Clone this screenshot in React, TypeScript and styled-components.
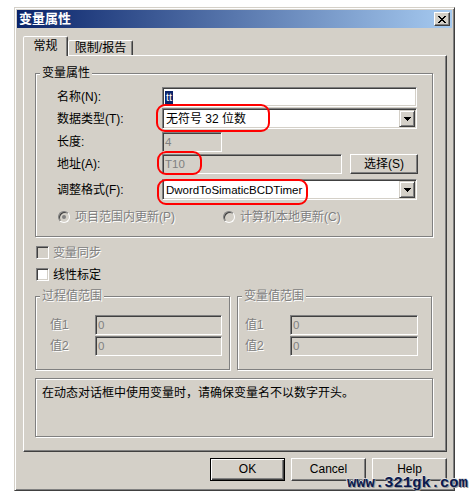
import React from "react";
import styled, { createGlobalStyle, css } from "styled-components";

const FACE = "#d4d0c8";
const SHADOW = "#808080";
const DARK = "#404040";

const GlobalStyle = createGlobalStyle`
  html, body { margin: 0; padding: 0; background: #fff; }
  body {
    font-family: "Liberation Sans", "Noto Sans CJK SC", sans-serif;
    font-size: 12px;
    line-height: 14px;
    color: #000;
  }
`;

const raised = css`
  border: 1px solid;
  border-color: #fff ${DARK} ${DARK} #fff;
  box-shadow: inset -1px -1px ${SHADOW};
`;

const sunken = css`
  border: 1px solid;
  border-color: ${SHADOW} #fff #fff ${SHADOW};
  box-shadow: inset 1px 1px ${DARK}, inset -1px -1px ${FACE};
`;

const etched = css`
  border: 1px solid ${SHADOW};
  box-shadow: 1px 1px 0 #fff, inset 1px 1px 0 #fff;
`;

const greyText = css`
  color: ${SHADOW};
  text-shadow: 1px 1px 0 #fff;
`;

const Page = styled.div`
  position: relative;
  width: 469px;
  height: 499px;
  padding: 7px 0 0 14px;
  box-sizing: border-box;
  overflow: hidden;
`;

const Window = styled.div`
  position: relative;
  box-sizing: border-box;
  width: 441px;
  height: 484px;
  padding: 2px;
  background: ${FACE};
  border: 1px solid;
  border-color: ${FACE} ${DARK} ${DARK} ${FACE};
  box-shadow: inset 1px 1px #fff, inset -1px -1px ${SHADOW};
  display: flex;
  flex-direction: column;
`;

const TitleBar = styled.div`
  height: 18px;
  flex: none;
  display: flex;
  align-items: center;
  justify-content: space-between;
  padding: 0 2px 0 2px;
  background: linear-gradient(to right, #0a246a, #a6caf0);
`;

const Title = styled.span`
  color: #fff;
  font-weight: bold;
  font-size: 13px;
`;

const CloseButton = styled.div`
  box-sizing: border-box;
  width: 16px;
  height: 14px;
  background: ${FACE};
  ${raised};
  display: flex;
  align-items: center;
  justify-content: center;
`;

const Body = styled.div`
  flex: 1;
  display: flex;
  flex-direction: column;
  padding: 8px 5px 0 6px;
`;

const TabStrip = styled.div`
  height: 19px;
  display: flex;
  align-items: flex-end;
`;

const Tab = styled.div<{ $active?: boolean; $w: number }>`
  position: relative;
  box-sizing: border-box;
  width: ${(p) => p.$w}px;
  height: ${(p) => (p.$active ? 20 : 15)}px;
  margin-bottom: ${(p) => (p.$active ? -1 : 0)}px;
  z-index: ${(p) => (p.$active ? 1 : 0)};
  background: ${FACE};
  border: 1px solid;
  border-bottom: none;
  border-color: #fff ${DARK} transparent #fff;
  border-radius: 2px 2px 0 0;
  box-shadow: inset -1px 0 ${SHADOW};
  display: flex;
  align-items: center;
  justify-content: center;
  padding-bottom: ${(p) => (p.$active ? 2 : 0)}px;
`;

const TabPanel = styled.div`
  box-sizing: border-box;
  height: 397px;
  border: 1px solid;
  border-color: #fff ${DARK} ${DARK} #fff;
  box-shadow: inset -1px -1px ${SHADOW};
  padding: 17px 0 0 11px;
  display: flex;
  flex-direction: column;
  align-items: flex-start;
`;

const Group = styled.div<{ $w: number }>`
  box-sizing: border-box;
  width: ${(p) => p.$w}px;
  ${etched};
`;

const GroupTitle = styled.div<{ $disabled?: boolean }>`
  width: fit-content;
  margin: -8px 0 0 4px;
  padding: 0 2px;
  background: ${FACE};
  ${(p) => p.$disabled && greyText};
`;

const Form = styled.div`
  padding: 0 15px 14px 21px;
`;

const FormRow = styled.div<{ $mt: number; $h: number }>`
  margin-top: ${(p) => p.$mt}px;
  height: ${(p) => p.$h}px;
  display: grid;
  grid-template-columns: 105px auto;
  align-items: center;
`;

const Label = styled.span<{ $disabled?: boolean }>`
  white-space: nowrap;
  ${(p) => p.$disabled && greyText};
`;

const FieldLine = styled.div`
  display: flex;
  align-items: center;
  gap: 8px;
`;

const TextBox = styled.div<{ $w: number; $h?: number; $disabled?: boolean }>`
  box-sizing: border-box;
  width: ${(p) => p.$w}px;
  height: ${(p) => p.$h ?? 20}px;
  ${sunken};
  background: ${(p) => (p.$disabled ? FACE : "#fff")};
  color: ${(p) => (p.$disabled ? SHADOW : "#000")};
  padding: 0 2px;
  display: flex;
  align-items: center;
  font-size: 12px;
  white-space: nowrap;
  overflow: hidden;
`;

const Selected = styled.span`
  background: #0a246a;
  color: #fff;
  font-size: 11px;
  line-height: 13px;
  padding: 0 1px;
`;

const LatinText = styled.span`
  font-size: 11.5px;
`;

const ComboBox = styled.div<{ $w: number }>`
  box-sizing: border-box;
  width: ${(p) => p.$w}px;
  height: 21px;
  ${sunken};
  background: #fff;
  padding: 1px;
  display: flex;
  align-items: stretch;
`;

const ComboText = styled.div`
  flex: 1;
  display: flex;
  align-items: center;
  padding-left: 2px;
  white-space: nowrap;
`;

const ComboArrow = styled.div`
  box-sizing: border-box;
  width: 16px;
  background: ${FACE};
  border: 1px solid;
  border-color: ${FACE} ${DARK} ${DARK} ${FACE};
  box-shadow: inset 1px 1px #fff, inset -1px -1px ${SHADOW};
  display: flex;
  align-items: center;
  justify-content: center;
`;

const PushButton = styled.div<{ $w: number; $h: number; $default?: boolean }>`
  box-sizing: border-box;
  width: ${(p) => p.$w}px;
  height: ${(p) => p.$h}px;
  background: ${FACE};
  display: flex;
  align-items: center;
  justify-content: center;
  font-size: 12px;
  line-height: 13px;
  ${(p) =>
    p.$default
      ? css`
          border: 1px solid #000;
          box-shadow: inset 1px 1px #fff, inset -1px -1px ${DARK},
            inset -2px -2px ${SHADOW};
        `
      : raised};
`;

const RadioRow = styled.div`
  margin-top: 10px;
  height: 12px;
  padding-left: 1px;
  display: grid;
  grid-template-columns: 165px auto;
  align-items: center;
`;

const RadioOption = styled.div`
  display: flex;
  align-items: center;
  gap: 5px;
  ${greyText};
`;

const Radio = styled.span<{ $checked?: boolean }>`
  box-sizing: border-box;
  width: 12px;
  height: 12px;
  border-radius: 50%;
  border: 1px solid;
  border-color: ${SHADOW} #fff #fff ${SHADOW};
  box-shadow: inset 1px 1px ${DARK}, inset -1px -1px ${FACE};
  background: ${FACE};
  display: flex;
  align-items: center;
  justify-content: center;
  &::after {
    content: "";
    display: ${(p) => (p.$checked ? "block" : "none")};
    width: 4px;
    height: 4px;
    border-radius: 50%;
    background: ${SHADOW};
  }
`;

const CheckRow = styled.div`
  margin: 9px 0 0 1px;
  display: flex;
  align-items: center;
  gap: 4px;
  height: 13px;
`;

const CheckBox = styled.span<{ $disabled?: boolean }>`
  box-sizing: border-box;
  width: 13px;
  height: 13px;
  ${sunken};
  background: ${(p) => (p.$disabled ? FACE : "#fff")};
`;

const RangeRow = styled.div`
  margin-top: 15px;
  display: flex;
  gap: 7px;
`;

const RangeGrid = styled.div<{ $pl: number }>`
  padding: 12px 0 13px ${(p) => p.$pl}px;
  display: flex;
  flex-direction: column;
  gap: 1px;
`;

const RangeLine = styled.div`
  display: grid;
  grid-template-columns: 45px auto;
  align-items: center;
  height: 20px;
`;

const InfoBox = styled.div`
  box-sizing: border-box;
  margin-top: 8px;
  width: 398px;
  height: 59px;
  ${etched};
  padding: 7px 6px;
`;

const ButtonBar = styled.div`
  margin-top: 6px;
  display: flex;
  justify-content: flex-end;
  gap: 6px;
`;

const Mark = styled.div<{ $x: number; $y: number; $w: number; $h: number }>`
  position: absolute;
  left: ${(p) => p.$x}px;
  top: ${(p) => p.$y}px;
  width: ${(p) => p.$w}px;
  height: ${(p) => p.$h}px;
  box-sizing: border-box;
  border: 2px solid #ff0000;
  border-radius: 9px;
  pointer-events: none;
`;

const Watermark = styled.div`
  position: absolute;
  left: 347px;
  top: 477px;
  font-family: "Liberation Mono", monospace;
  font-weight: bold;
  font-size: 15.5px;
  line-height: 13px;
  color: #0b1a4e;
  text-shadow: 1px 1px 0 #9a9a9a, -1px 0 0 #e0e0e0, 0 -1px 0 #e0e0e0;
  white-space: nowrap;
`;

const CloseGlyph = () => {
  const rows = [
    [0, 1, 6, 7],
    [1, 2, 5, 6],
    [2, 3, 4, 5],
    [3, 4],
    [2, 3, 4, 5],
    [1, 2, 5, 6],
    [0, 1, 6, 7],
  ];
  return (
    <svg width="8" height="7" viewBox="0 0 8 7" shapeRendering="crispEdges">
      {rows.map((cols, y) =>
        cols.map((x) => <rect key={`${x}-${y}`} x={x} y={y} width="1" height="1" fill="#000" />)
      )}
    </svg>
  );
};

const ArrowGlyph = () => (
  <svg width="7" height="4" viewBox="0 0 7 4" shapeRendering="crispEdges">
    <rect x="0" y="0" width="7" height="1" fill="#000" />
    <rect x="1" y="1" width="5" height="1" fill="#000" />
    <rect x="2" y="2" width="3" height="1" fill="#000" />
    <rect x="3" y="3" width="1" height="1" fill="#000" />
  </svg>
);

const RangeGroup: React.FC<{ title: string; pl: number; inputW: number }> = ({
  title,
  pl,
  inputW,
}) => (
  <Group $w={195}>
    <GroupTitle $disabled>{title}</GroupTitle>
    <RangeGrid $pl={pl}>
      <RangeLine>
        <Label $disabled>值1</Label>
        <TextBox $w={inputW} $disabled>
          <LatinText>0</LatinText>
        </TextBox>
      </RangeLine>
      <RangeLine>
        <Label $disabled>值2</Label>
        <TextBox $w={inputW} $disabled>
          <LatinText>0</LatinText>
        </TextBox>
      </RangeLine>
    </RangeGrid>
  </Group>
);

const App: React.FC = () => (
  <Page>
    <GlobalStyle />
    <Window>
      <TitleBar>
        <Title>变量属性</Title>
        <CloseButton>
          <CloseGlyph />
        </CloseButton>
      </TitleBar>
      <Body>
        <TabStrip>
          <Tab $active $w={45}>常规</Tab>
          <Tab $w={65}>限制/报告</Tab>
        </TabStrip>
        <TabPanel>
          <Group $w={398}>
            <GroupTitle>变量属性</GroupTitle>
            <Form>
              <FormRow $mt={7} $h={20}>
                <Label>名称(N):</Label>
                <TextBox $w={255}>
                  <Selected>tt</Selected>
                </TextBox>
              </FormRow>
              <FormRow $mt={1} $h={21}>
                <Label>数据类型(T):</Label>
                <ComboBox $w={255}>
                  <ComboText>无符号 32 位数</ComboText>
                  <ComboArrow>
                    <ArrowGlyph />
                  </ComboArrow>
                </ComboBox>
              </FormRow>
              <FormRow $mt={3} $h={20}>
                <Label>长度:</Label>
                <TextBox $w={60} $disabled>
                  <LatinText>4</LatinText>
                </TextBox>
              </FormRow>
              <FormRow $mt={2} $h={20}>
                <Label>地址(A):</Label>
                <FieldLine>
                  <TextBox $w={180} $disabled>
                    <LatinText>T10</LatinText>
                  </TextBox>
                  <PushButton $w={68} $h={20}>选择(S)</PushButton>
                </FieldLine>
              </FormRow>
              <FormRow $mt={5} $h={21}>
                <Label>调整格式(F):</Label>
                <ComboBox $w={255}>
                  <ComboText>
                    <LatinText>DwordToSimaticBCDTimer</LatinText>
                  </ComboText>
                  <ComboArrow>
                    <ArrowGlyph />
                  </ComboArrow>
                </ComboBox>
              </FormRow>
              <RadioRow>
                <RadioOption>
                  <Radio $checked />
                  项目范围内更新(P)
                </RadioOption>
                <RadioOption>
                  <Radio />
                  计算机本地更新(C)
                </RadioOption>
              </RadioRow>
            </Form>
          </Group>

          <CheckRow>
            <CheckBox $disabled />
            <Label $disabled>变量同步</Label>
          </CheckRow>
          <CheckRow>
            <CheckBox />
            <Label>线性标定</Label>
          </CheckRow>

          <RangeRow>
            <RangeGroup title="过程值范围" pl={14} inputW={127} />
            <RangeGroup title="变量值范围" pl={7} inputW={128} />
          </RangeRow>

          <InfoBox>在动态对话框中使用变量时，请确保变量名不以数字开头。</InfoBox>
        </TabPanel>

        <ButtonBar>
          <PushButton $w={75} $h={23} $default>OK</PushButton>
          <PushButton $w={75} $h={23}>Cancel</PushButton>
          <PushButton $w={75} $h={23}>Help</PushButton>
        </ButtonBar>
      </Body>

      <Mark $x={141} $y={96} $w={114} $h={28} />
      <Mark $x={142} $y={143} $w={45} $h={24} />
      <Mark $x={142} $y={171} $w={151} $h={26} />
    </Window>
    <Watermark>www.321gk.com</Watermark>
  </Page>
);

export default App;
